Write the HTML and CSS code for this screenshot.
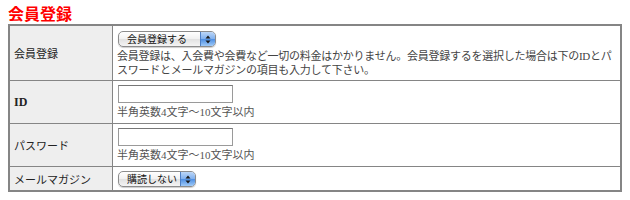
FILE: index.html
```html
<!DOCTYPE html>
<html lang="ja">
  <head>
    <meta charset="UTF-8" />
    <title>会員登録</title>
    <link rel="stylesheet" href="styles.css">
  </head>
  <body>
    <h2 class="title">会員登録</h2>
    <table class="entry-table">
      <tr class="row-member">
        <th>会員登録</th>
        <td>
          <span class="select-wrap select-wide">
            <select name="member">
              <option>会員登録する</option>
              <option>会員登録しない</option>
            </select>
            <span class="select-arrow">
              <svg width="6" height="9" viewBox="0 0 6 9"><path d="M3 0.5 L5.5 3.5 H0.5 Z M3 8.5 L5.5 5.5 H0.5 Z" fill="#1a1a1a"/></svg>
            </span>
          </span>
          <p class="note">会員登録は、入会費や会費など一切の料金はかかりません。会員登録するを選択した場合は下のIDとパ<br>スワードとメールマガジンの項目も入力して下さい。</p>
        </td>
      </tr>
      <tr class="row-input">
        <th class="latin">ID</th>
        <td>
          <input type="text" class="text-input" name="id" />
          <p class="hint">半角英数4文字〜10文字以内</p>
        </td>
      </tr>
      <tr class="row-input">
        <th>パスワード</th>
        <td>
          <input type="password" class="text-input" name="password" />
          <p class="hint">半角英数4文字〜10文字以内</p>
        </td>
      </tr>
      <tr class="row-mail">
        <th>メールマガジン</th>
        <td>
          <span class="select-wrap select-narrow">
            <select name="magazine">
              <option>購読しない</option>
              <option>購読する</option>
            </select>
            <span class="select-arrow">
              <svg width="6" height="9" viewBox="0 0 6 9"><path d="M3 0.5 L5.5 3.5 H0.5 Z M3 8.5 L5.5 5.5 H0.5 Z" fill="#1a1a1a"/></svg>
            </span>
          </span>
        </td>
      </tr>
    </table>
  </body>
</html>
```

FILE: styles.css
```css
/* Page */
body {
  margin: 0 8px;
  padding-top: 3px;
  background: #fff;
  color: #333;
  font-family: "Liberation Serif", "Noto Sans CJK JP", serif;
  font-size: 11px;
}

.title {
  margin: 0;
  color: #f00;
  font-family: "Noto Sans CJK JP", sans-serif;
  font-size: 16px;
  font-weight: bold;
  line-height: 21px;
}

/* Entry table */
.entry-table {
  width: 614px;
  border-collapse: collapse;
  border: 2px solid #858585;
}

.entry-table th,
.entry-table td {
  border: 1px solid #858585;
  line-height: 14px;
}

.entry-table th {
  width: 94px;
  padding: 0 4px;
  background-color: #eeeeee;
  text-align: left;
  font-weight: normal;
  font-family: "Noto Sans CJK JP", sans-serif;
  color: #222;
}

.entry-table th.latin {
  font-family: "Liberation Serif", serif;
  font-weight: bold;
  font-size: 12px;
}

.entry-table td {
  padding: 5px 4px 3px;
  vertical-align: top;
}

.row-input td {
  padding: 4px 4px 4px;
}

.row-mail td {
  padding: 4px 4px 3px;
}

.note {
  margin: 2px 0 0;
  letter-spacing: -0.25px;
  color: #444;
}

.hint {
  margin: 2px 0 0;
  color: #555;
}

/* Text inputs */
.text-input {
  display: block;
  box-sizing: border-box;
  width: 115px;
  height: 18px;
  margin: 0 0 0 1px;
  border: 1px solid #9a9a9a;
  border-top-color: #777;
  background: #fff;
}

/* Aqua style selects */
.select-wrap {
  position: relative;
  display: inline-block;
  height: 16px;
  margin-left: 1px;
  vertical-align: top;
}

.select-wrap select {
  -webkit-appearance: none;
  appearance: none;
  box-sizing: border-box;
  height: 16px;
  margin: 0;
  padding: 0 0 0 8px;
  border: 1px solid #8c8c8c;
  border-radius: 5px;
  background: linear-gradient(#ffffff, #f1f1f1 50%, #e1e1e1 51%, #f4f4f4);
  box-shadow: 0 1px 1px rgba(0, 0, 0, 0.2);
  color: #111;
  font-family: "Noto Sans CJK JP", sans-serif;
  font-size: 10px;
  line-height: 14px;
}

.select-wide select {
  width: 98px;
}

.select-narrow select {
  width: 78px;
}

.select-arrow {
  position: absolute;
  top: 1px;
  right: 1px;
  width: 14px;
  height: 14px;
  display: flex;
  align-items: center;
  justify-content: center;
  border-left: 1px solid #4f7fc4;
  border-radius: 0 4px 4px 0;
  background: linear-gradient(#bcd6f7, #7fb0ee 50%, #4d8ee2 51%, #9fcaf8);
  pointer-events: none;
}
```
